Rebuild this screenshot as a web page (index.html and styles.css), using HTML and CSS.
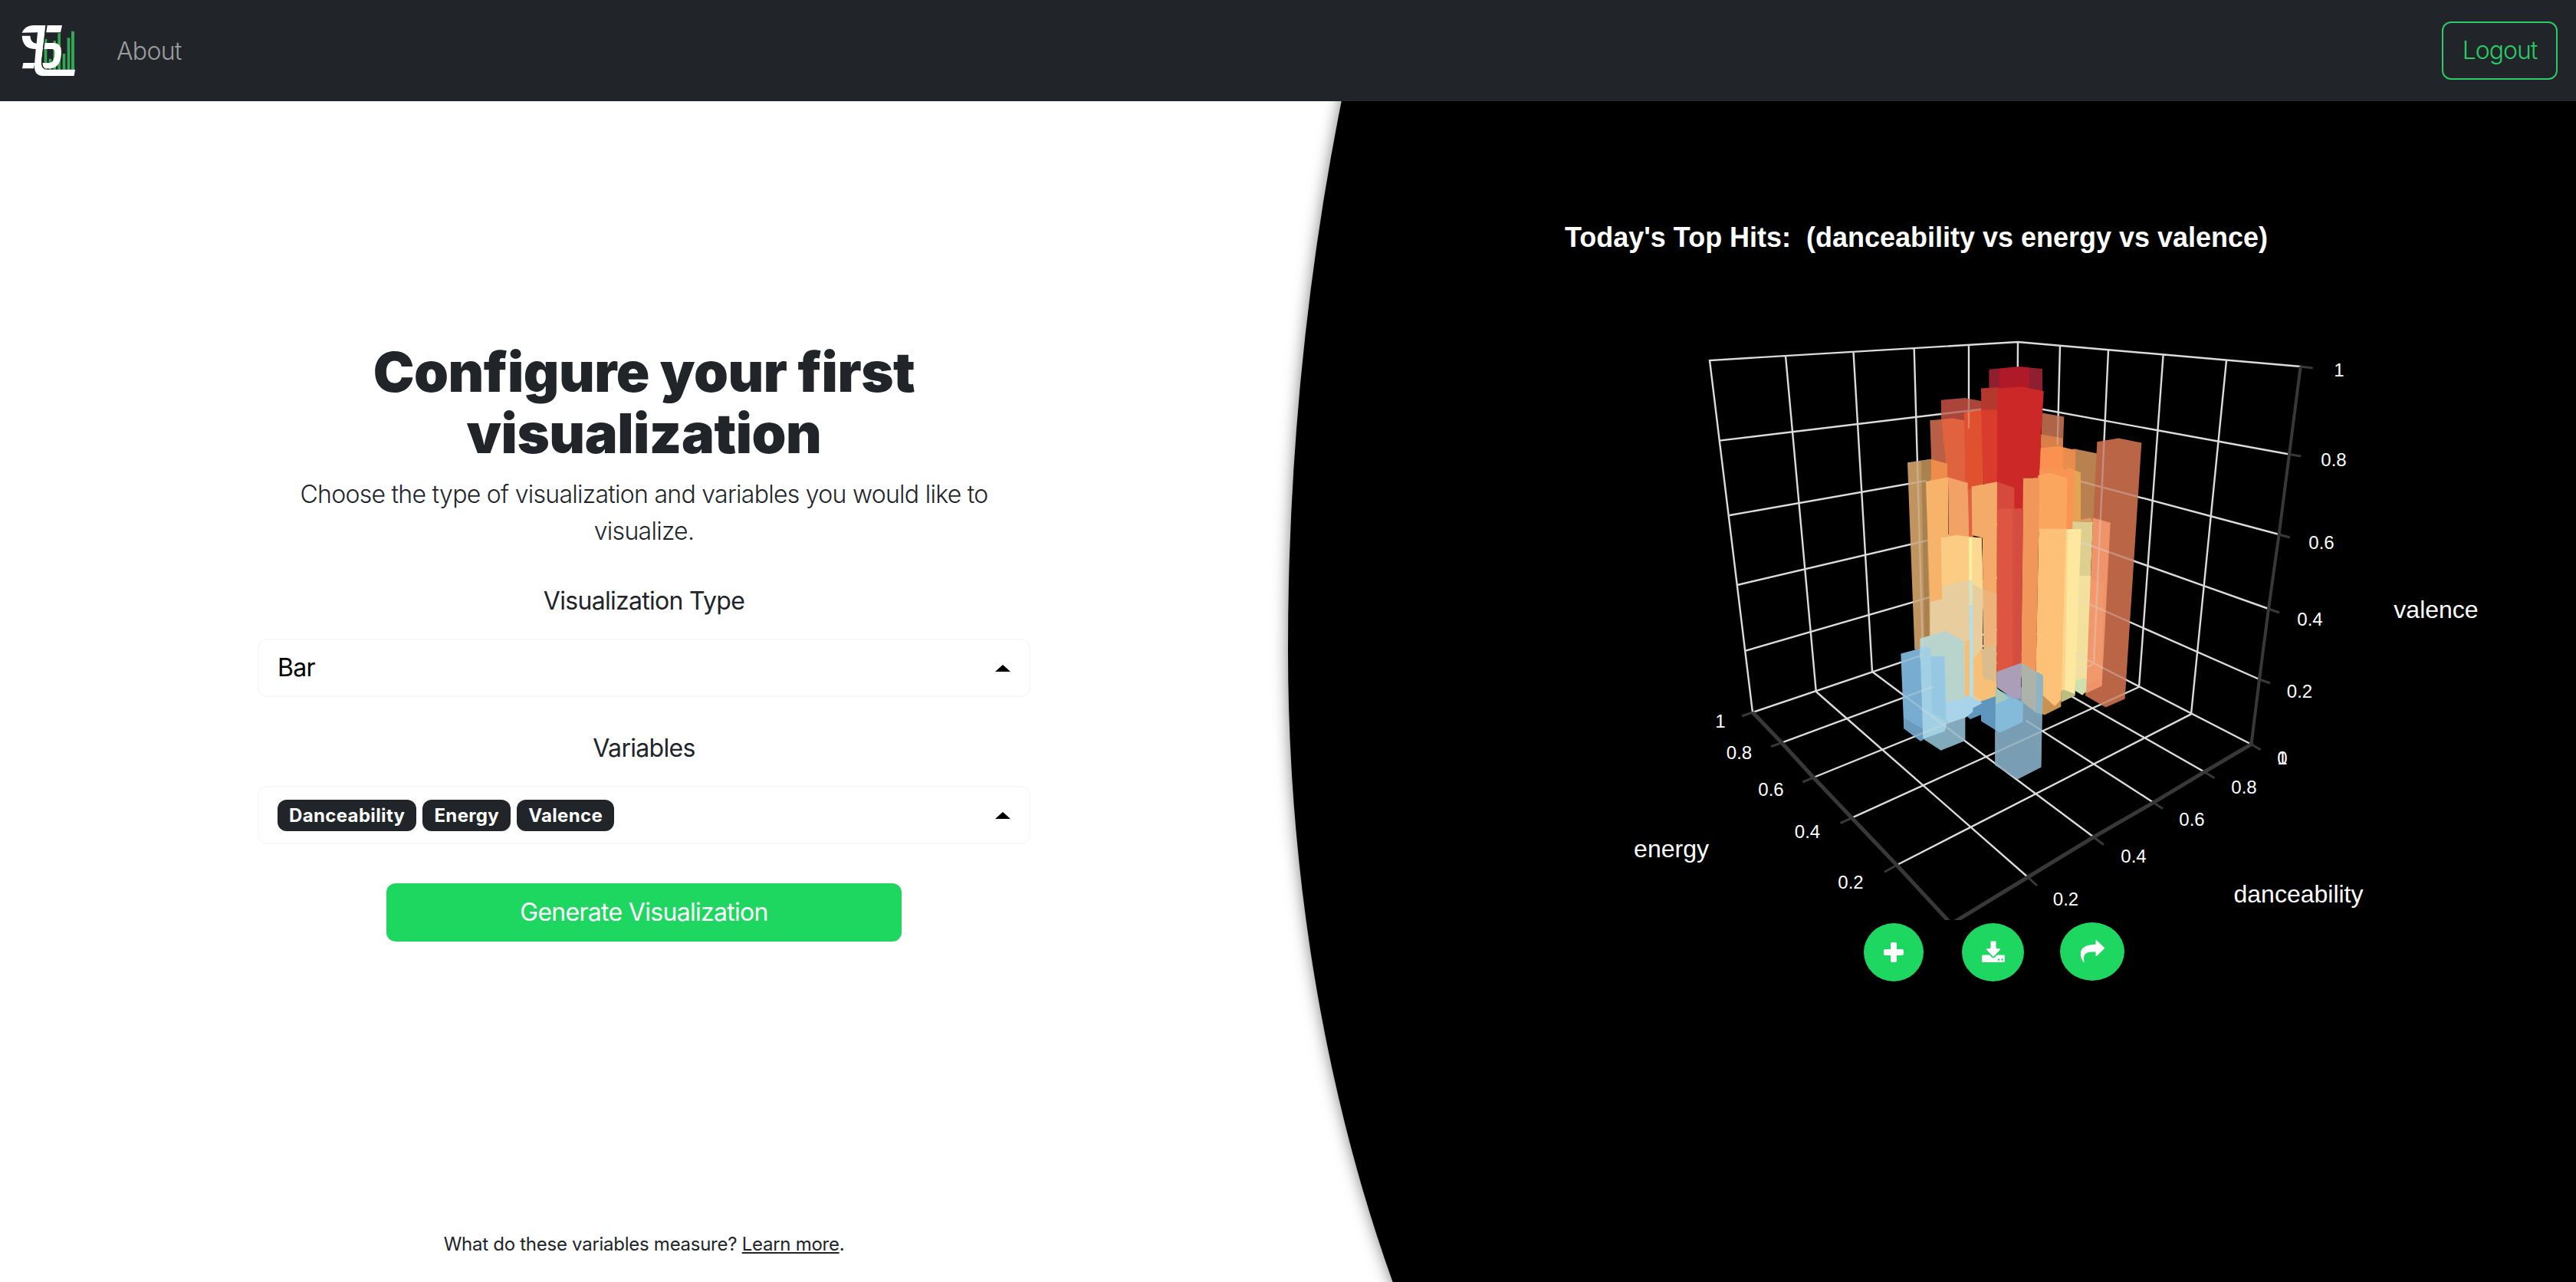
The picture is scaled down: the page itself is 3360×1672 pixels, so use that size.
FILE: index.html
```html
<!DOCTYPE html>
<html lang="en">
<head>
<meta charset="utf-8">
<title>Configure your visualization</title>
<link rel="stylesheet" href="styles.css">
</head>
<body>
<nav class="navbar">
  <a class="brand" href="#">
    <svg width="70" height="68" viewBox="84 96 210 204">
      <path fill="#33a853" d="M173 152h11v120h-11zM191 230h11v42h-11zM208 160h11v112h-11zM226 130h11v142h-11zM245 210h11v62h-11zM263 148h11v124h-11zM279 122h12v150h-12z"/>
      <g fill="#fff">
        <path d="M86 128Q98 100 130 99H178L162 240Q160 271 182 272H294L290 297H165Q132 295 135 252L140 192Q88 192 86 140H118Q120 168 143 170L147 127Z"/>
        <path d="M185 99H243L237 127H181Z"/>
        <path d="M91 246H136L132 268H87Z"/>
        <path fill-rule="evenodd" d="M176 168H212Q241 170 240 204Q239 266 196 268H176Q165 262 166 246H194Q214 244 214 206Q214 192 204 192H172Z"/>
      </g>
      <path fill="none" stroke="#212529" stroke-width="3" d="M181 99L164 240Q164 264 178 271"/>
    </svg>
  </a>
  <a class="nav-link" href="#">About</a>
  <button class="logout">Logout</button>
</nav>
<main class="page">
  <section class="config">
    <div class="form">
      <h1>Configure your first<br>visualization</h1>
      <p class="lead">Choose the type of visualization and variables you would like to<br>visualize.</p>
      <label>Visualization Type</label>
      <div class="select"><span class="value">Bar</span><i class="caret"></i></div>
      <label>Variables</label>
      <div class="select">
        <span class="badges"><span class="badge">Danceability</span><span class="badge">Energy</span><span class="badge">Valence</span></span>
        <i class="caret"></i>
      </div>
      <button class="generate">Generate Visualization</button>
    </div>
    <p class="help">What do these variables measure? <a href="#">Learn more</a>.</p>
  </section>
  <section class="preview">
    <div class="backdrop"></div>
    <svg class="chart" width="1680" height="960" viewBox="1680 240 1680 960">
      <defs>
        <clipPath id="see-through">
          <path transform="translate(2440 460) scale(.33333 .36354)" d="M144 394L235 382L216 462L232 895V1062L172 1065ZM276 170L368 162L432 172V250L276 320ZM668 216L757 230L752 345L887 362L886 320L970 307L1060 323L995 1242L920 1272L840 1230L790 1200L824 633L822 430L752 340L668 300ZM118 1080L193 1060L298 1325L370 1310V1392L275 1427L195 1393L130 1348ZM488 1270L595 1325L672 1290L667 1487L575 1530L487 1480Z"/>
        </clipPath>
      </defs>
      <text class="chart-title" x="2041" y="322" textLength="917" lengthAdjust="spacingAndGlyphs" xml:space="preserve">Today's Top Hits:&#160; (danceability vs energy vs valence)</text>
      <!-- walls and floor grid -->
      <g class="grid" id="grid">
        <path d="M2286 929L2230 470L2632 446L3000.7 478M2329 464L2368.8 902M2417.5 458.6L2442 876M2496.7 454.6L2508 853M2568 450L2568 832M2632 446L2630 813M2687 450.7L2677 838M2750 456.8L2731 866M2821.6 463L2790 896M2904 470.4L2858 931.4"/>
        <path d="M2243 574.6L2632 528L2986 592.5M2256 672L2631.5 606L2972.6 697M2266 763L2631 677.5L2959 794M2277 848.6L2630.5 746L2947 886M2286 929L2630 813L2936.5 970.7"/>
        <path d="M2324 968.7L2677 838M2365.4 1014L2731 866M2415.5 1066.7L2790 896M2474 1128.3L2858 931.4M2645 1144L2368.8 902M2731 1091.7L2442 876M2809 1046.7L2508 853M2875.4 1006.7L2568 832"/>
      </g>
      <g class="axis">
        <path stroke-width="5" d="M2286 929L2324 968.7L2365.4 1014L2415.5 1066.7L2474 1128.3L2545 1205L2645 1144L2731 1091.7L2809 1046.7L2875.4 1006.7L2936.5 970.7"/>
        <path stroke-width="4" d="M2936.5 970.7L2947 886L2959 794L2972.6 697L2986 592.5L3000.7 478"/>
        <path stroke-width="3" d="M2286 929l-14 5M2324 968.7l-14 5M2365.4 1014l-14 6M2415.5 1066.7l-15 7M2474 1128.3l-16 9M2645 1144l12 11M2731 1091.7l13 10M2809 1046.7l12 8M2875.4 1006.7l13 8M2936.5 970.7l12 7M3000.7 478l16 2M2986 592.5l15 2.5M2972.6 697l14 4M2959 794l14 5M2947 886l14 5"/>
      </g>
      <!-- bars, back to front -->
      <g transform="translate(2440 460) scale(.33333 .36354)">
        <path fill="#8f1f2f" d="M463 60L580 50L672 58V145H463Z"/>
        <path fill="#af1928" d="M503 57L580 50L620 53V130H503Z"/>
        <path fill="#ab4639" d="M276 170L368 162L434 173V260H276Z"/>
        <path fill="#b85f46" d="M232 243L320 235L340 420L300 480L238 400Z"/>
        <path fill="#e0633f" d="M277 240L320 235L366 243V215L400 208L440 210V560L397 670H383L380 467L300 450Z"/>
        <path fill="#e0512f" d="M366 215L435 205V480L383 490L370 450Z"/>
        <path fill="#b5382f" d="M432 128L500 124V220H433Z"/>
        <path fill="#d93c2c" d="M433 205H500V480L438 470Z"/>
        <path fill="#b06448" d="M670 216L757 230L752 345H668Z"/>
        <path fill="#d87f4a" d="M665 292L752 307V345H665Z"/>
        <path fill="#b98251" d="M735 350L800 345L887 362L875 600L815 640L790 440Z"/>
        <path fill="#e98d4e" d="M735 335L802 350L797 640H735Z"/>
        <path fill="#fa9150" d="M637 345L735 335L752 340V640H637Z"/>
        <path fill="#cc2828" d="M495 128L590 122L677 138L668 280L660 450H597V562H495Z"/>
        <path fill="#c09460" d="M144 394L235 382L240 1080L172 1065Z"/>
        <path fill="#a9824f" d="M198 388L235 382V480L222 700L232 1070L212 1066Z"/>
        <path fill="#ee8c4b" d="M235 382L300 398V462L235 466Z"/>
        <path fill="#f8b36a" d="M216 462L303 447L306 900L232 895Z"/>
        <path fill="#f2a167" d="M303 447L380 467L384 670H306Z"/>
        <path fill="#e3a454" d="M770 412L822 430V640H770Z"/>
        <path fill="#f89555" d="M660 420L700 414L797 420L795 640H660Z"/>
        <path fill="#fba65f" d="M655 440L700 431L770 450L765 640H655Z"/>
        <path fill="#ba6647" d="M886 320L970 307L1060 323L995 1242L920 1272L840 1230L870 620Z"/>
        <path fill="#dccf91" d="M790 605L870 608L860 810H790Z"/>
        <path fill="#f3df9e" d="M800 800H865L856 1205L828 1228L790 1200Z"/>
        <path fill="#cfe0b0" d="M800 1178L835 1168L856 1180V1205L828 1228L795 1210Z"/>
        <path fill="#ef946b" d="M870 592L938 610L905 1195L843 1222Z"/>
        <path fill="#db9d69" d="M790 605L860 592L872 608Z"/>
        <path fill="#f69c70" opacity=".5" d="M862 815L913 825L903 1170L848 1190Z"/>
        <path fill="#b9bf80" d="M745 1200L800 1192V1230L745 1254Z"/>
        <path fill="#fee79f" d="M765 633H824L799 1225L745 1205Z"/>
        <path fill="#fbd58c" d="M762 633H772L760 1210H744Z"/>
        <path fill="#c9924f" d="M588 1140L645 1190L745 1220V1270L680 1300L600 1265Z"/>
        <path fill="#fdc177" d="M658 632H765L745 1245L720 1268L645 1205Z"/>
        <path fill="#f1975c" d="M597 450H660L658 632L645 1240L588 1160Z"/>
        <path fill="#d54a3d" d="M495 463L562 485V565H495Z"/>
        <path fill="#de5542" d="M495 560H597L588 1160L562 1243L493 1160Z"/>
        <path fill="#d34e41" d="M556 560H597L588 1160L556 1200Z"/>
        <path fill="#fccc84" d="M275 664L335 655L434 664L442 900L395 1240L300 1250L280 900Z"/>
        <path fill="#fbd992" d="M397 664H434L440 850H397Z"/>
        <path fill="#e8cd9f" d="M232 895L282 883V838L370 815L441 850L436 1260L290 1260L232 1100Z"/>
        <path fill="#f4aa68" d="M395 480L495 463L493 1262L470 1265L405 1230L442 1060L437 664L397 655Z"/>
        <path fill="#eeb37a" d="M441 850L493 862V1050L441 1060Z"/>
        <path fill="#f8c077" d="M402 1100L432 1065L445 1165L493 1160V1262L468 1265L403 1230Z"/>
        <path fill="#dcbc8c" d="M432 1065L490 1045V1180L440 1170Z"/>
        <path fill="#fff0a6" d="M384 665H397V815H385Z"/>
        <path fill="#d4e4c4" d="M385 815H398V905H386Z"/>
        <path fill="#b5dee7" d="M386 905H399L402 1240H388Z"/>
        <path fill="#f4be7b" d="M368 1035L387 1030V1240L370 1245Z"/>
        <path fill="#6097be" d="M372 1302L400 1262L480 1235L495 1250L435 1298L390 1315Z"/>
        <path fill="#81abbd" d="M205 1365L300 1310H370V1392L275 1427L208 1387Z"/>
        <path fill="#a9d3eb" d="M280 1250L385 1230L437 1257L400 1275V1288L370 1310L300 1328Z"/>
        <path fill="#79acd0" d="M118 1080L205 1058L232 1062V1370L195 1393L130 1348Z"/>
        <path fill="#6a9cbd" d="M130 1310L205 1350V1390L195 1393L130 1348Z"/>
        <path fill="#b9d3cd" d="M193 1025L293 998L365 1035L368 1240L300 1255L235 1180L193 1100Z"/>
        <path fill="#a1cfe4" d="M193 1050L232 1060L236 1090H290L298 1325L290 1358L205 1386Z"/>
        <path fill="#91c5e2" opacity=".7" d="M236 1090H288L292 1320L240 1290Z"/>
        <path fill="#5f96bd" d="M432 1262L492 1230L597 1255L595 1325L505 1363L432 1322Z"/>
        <path fill="#7299b0" d="M487 1250L675 1158L667 1487L575 1530L487 1480Z"/>
        <path fill="#7a9fb4" d="M595 1240L672 1220L667 1487L575 1530L487 1480V1360L595 1325Z"/>
        <path fill="#84bbdb" d="M489 1205L597 1255L595 1325L505 1363L488 1355Z"/>
        <path fill="#a6c9ba" d="M490 1200L540 1240L490 1262Z"/>
        <path fill="#ab9eb8" d="M493 1145L590 1113L588 1240L562 1243L493 1200Z"/>
        <path fill="#adb3a8" d="M590 1113L675 1158L672 1298L645 1290L590 1250Z"/>
        <path fill="#8fb4c4" d="M650 1145L675 1158L672 1298L645 1290Z"/>
      </g>
      <g class="ghost" clip-path="url(#see-through)"><use href="#grid"/></g>
      <g class="ticks">
        <text x="3051" y="491">1</text><text x="3044" y="608">0.8</text><text x="3028" y="716">0.6</text><text x="3013" y="816">0.4</text><text x="2999.5" y="910">0.2</text>
        <text x="2244" y="949">1</text><text x="2268.5" y="990">0.8</text><text x="2310" y="1038">0.6</text><text x="2357.5" y="1093">0.4</text><text x="2414" y="1159">0.2</text>
        <text x="2977" y="997">0</text><text x="2977" y="997">1</text><text x="2927" y="1035">0.8</text><text x="2859" y="1077">0.6</text><text x="2783" y="1125">0.4</text><text x="2694.5" y="1181">0.2</text>
      </g>
      <g class="axis-title">
        <text x="3177.5" y="806">valence</text><text x="2180" y="1118">energy</text><text x="2998" y="1177">danceability</text>
      </g>
    </svg>
    <div class="actions">
      <button class="round plus"><svg width="26" height="26" viewBox="0 0 26 26"><path fill="#fff" d="M11 0h4q2 0 2 2v7h7q2 0 2 2v4q0 2-2 2h-7v7q0 2-2 2h-4q-2 0-2-2v-7H2q-2 0-2-2v-4q0-2 2-2h7V2q0-2 2-2z"/></svg></button>
      <button class="round save"><svg width="30" height="30" viewBox="0 0 30 30"><path fill="#fff" d="M11.500 1.500q0-1 1-1h5q1 0 1 1V10h4.500q2 .5.500 2L16 20q-1 1-2 0l-7.500-8q-1.500-1.500.5-2h4.500z"/><path fill="#fff" d="M1.500 18.500H10l3 3q2 1.500 4 0l3-3h8.500q1.500 0 1.500 1.500v6.500q0 1.500-1.500 1.500h-27Q0 28 0 26.500V20q0-1.500 1.500-1.500z"/><circle cx="22" cy="24.500" r="1.200" fill="#1ed760"/><circle cx="26.500" cy="24.500" r="1.200" fill="#1ed760"/></svg></button>
      <button class="round share"><svg width="34" height="32" viewBox="0 0 34 32"><path fill="#fff" d="M21.500 2.500q0-2 1.700-.8L32.500 10.500q1 1 0 2L23.200 21.500q-1.700 1.200-1.700-.8V16.500C11 16 4 17.500 6.500 29q.2 2-1 .8C-2 18 1 7 21.500 6.800z"/></svg></button>
    </div>
  </section>
</main>
</body>
</html>
```
FILE: styles.css
```css
* { box-sizing: border-box; }
body {
  margin: 0;
  height: 1672px;
  display: flex;
  flex-direction: column;
  overflow: hidden;
  background: #fff;
  color: #212529;
  font: 400 32px/1.5 Inter, "Liberation Sans", sans-serif;
  letter-spacing: -.7px;
}
button { font: inherit; letter-spacing: inherit; border: 0; padding: 0; }
h1, p { margin: 0; }

.navbar {
  flex: 0 0 132px;
  display: flex;
  align-items: center;
  padding: 0 24px 0 28px;
  background: #212529;
  font-weight: 300;
}
.brand { display: flex; }
.nav-link { margin: 1px 0 0 54px; color: #9b9d9f; text-decoration: none; letter-spacing: -.7px; }
.logout {
  width: 151px;
  height: 76px;
  margin-left: auto;
  border: 2px solid #2bcb67;
  border-radius: 12px;
  background: none;
  color: #2bcb67;
  letter-spacing: -1px;
}

.page { flex: 1; display: grid; grid-template-columns: 1fr 1fr; min-height: 0; overflow: hidden; }
.config { display: flex; flex-direction: column; align-items: center; justify-content: space-between; padding: 313px 0 31px; }
.form { width: 1008px; display: flex; flex-direction: column; align-items: center; text-align: center; }
h1 { font-size: 72px; font-weight: 900; line-height: 80px; white-space: nowrap; letter-spacing: -.45px; }
.lead { font-weight: 300; margin-top: 16px; white-space: nowrap; letter-spacing: -.72px; }
label { margin-top: 43px; }
.select {
  width: 100%;
  height: 76px;
  margin-top: 25px;
  padding: 0 24px;
  display: flex;
  align-items: center;
  justify-content: space-between;
  border: 2px solid #f8f9fa;
  border-radius: 12px;
  color: #000;
}
.select + label { margin-top: 43px; }
.badges { display: flex; gap: 8px; letter-spacing: .35px; }
.badge { height: 41px; padding: 0 15px; border-radius: 12px; background: #212529; color: #fff; font-size: 24px; font-weight: 700; line-height: 41px; }
.caret { border: 10px solid transparent; border-top: 0; border-bottom: 9px solid #000; }
.generate { width: 672px; height: 76px; margin-top: 51px; border-radius: 12px; background: #1ed760; color: #fff; }
.help { font-size: 24px; letter-spacing: -.27px; }
.help a { color: inherit; }

.preview { position: relative; display: flex; flex-direction: column; }
.backdrop {
  position: absolute;
  left: 0;
  top: -1685px;
  width: 2600px;
  height: 4020px;
  background: #000;
  border-top-left-radius: 1536px 2400px;
  border-bottom-left-radius: 980px 1620px;
  box-shadow: 0 0 20px rgba(0, 0, 0, .5);
}
.chart { position: relative; margin-top: 108px; display: block; letter-spacing: 0; }
.chart text { font-family: "Liberation Sans", sans-serif; fill: #fff; }
.chart .chart-title { font-size: 36px; font-weight: 700; }
.grid { fill: none; stroke: #dcdcdc; stroke-width: 2.4; }
.axis { fill: none; stroke: #383838; }
.ghost { opacity: .35; }
.ticks { font-size: 24px; text-anchor: middle; }
.axis-title { font-size: 32px; text-anchor: middle; }

.actions { position: relative; display: flex; padding: 4px 0 0 751px; }
.round { height: 76px; display: flex; align-items: center; justify-content: center; border-radius: 50%; background: #1ed760; }
.plus { width: 78px; }
.save { width: 81px; margin-left: 50px; }
.share { width: 84px; margin: -1px 0 0 47px; }
```
